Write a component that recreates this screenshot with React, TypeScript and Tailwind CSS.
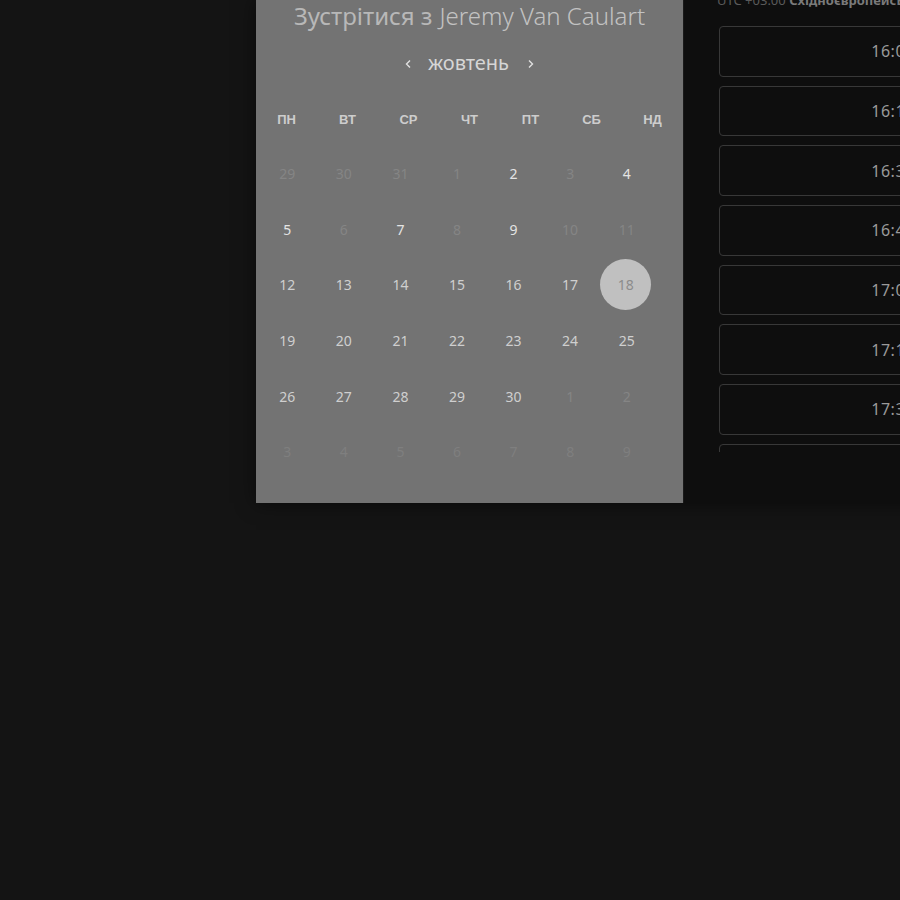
import React from 'react';

type Day = { n: number; state: 'off' | 'open' | 'on' | 'next' | 'sel' };

const weekdays = ['ПН', 'ВТ', 'СР', 'ЧТ', 'ПТ', 'СБ', 'НД'];

const days: Day[] = [
  { n: 29, state: 'off' }, { n: 30, state: 'off' }, { n: 31, state: 'off' }, { n: 1, state: 'off' },
  { n: 2, state: 'open' }, { n: 3, state: 'off' }, { n: 4, state: 'open' },
  { n: 5, state: 'open' }, { n: 6, state: 'off' }, { n: 7, state: 'open' }, { n: 8, state: 'off' },
  { n: 9, state: 'open' }, { n: 10, state: 'off' }, { n: 11, state: 'off' },
  { n: 12, state: 'on' }, { n: 13, state: 'on' }, { n: 14, state: 'on' }, { n: 15, state: 'on' },
  { n: 16, state: 'on' }, { n: 17, state: 'on' }, { n: 18, state: 'sel' },
  { n: 19, state: 'on' }, { n: 20, state: 'on' }, { n: 21, state: 'on' }, { n: 22, state: 'on' },
  { n: 23, state: 'on' }, { n: 24, state: 'on' }, { n: 25, state: 'on' },
  { n: 26, state: 'on' }, { n: 27, state: 'on' }, { n: 28, state: 'on' }, { n: 29, state: 'on' },
  { n: 30, state: 'on' }, { n: 1, state: 'off' }, { n: 2, state: 'off' },
  { n: 3, state: 'next' }, { n: 4, state: 'next' }, { n: 5, state: 'next' }, { n: 6, state: 'next' },
  { n: 7, state: 'next' }, { n: 8, state: 'next' }, { n: 9, state: 'next' },
];

const slots = ['16:00', '16:15', '16:30', '16:45', '17:00', '17:15', '17:30', '17:45'];

const dayColor: Record<Day['state'], string> = {
  off: 'text-[#858585]',
  open: 'text-[#e4e4e4]',
  on: 'text-[#cfcfcf]',
  next: 'text-[#7f7f7f]',
  sel: 'text-[#8c8c8c]',
};

const App: React.FC = () => {
  return (
    <div className="w-[900px] h-[900px] overflow-hidden bg-[#141414] font-['Noto_Sans',sans-serif]">
      <div className="ml-[256px] w-[820px] h-[503px] flex shadow-[0_0_18px_rgba(0,0,0,0.55)]">
        {/* calendar side */}
        <div className="w-[427px] shrink-0 bg-[#737373] flex flex-col">
          <div className="h-[34px] -mt-[1px] flex items-center justify-center text-[24px] text-[#b8b8b8]">
            <span>Зустрітися з</span>
            <span className="ml-[7px] font-light text-[#c2c2c2]">Jeremy Van Caulart</span>
          </div>
          <div className="mt-[14px] h-[34px] flex items-center justify-center text-[#d6d6d6]">
            <svg width="8" height="12" viewBox="0 0 8 12" className="mr-[16px]">
              <path d="M6 2.5 L2.5 6 L6 9.5" fill="none" stroke="#e0e0e0" strokeWidth="1.4" />
            </svg>
            <span className="text-[20px] leading-none pb-[2px]">жовтень</span>
            <svg width="8" height="12" viewBox="0 0 8 12" className="ml-[18px]">
              <path d="M2 2.5 L5.5 6 L2 9.5" fill="none" stroke="#e0e0e0" strokeWidth="1.4" />
            </svg>
          </div>
          <div className="mt-[29px] grid grid-cols-7 h-[16px] items-center font-['Liberation_Sans',sans-serif] font-bold text-[13px] text-[#cdcdcd]">
            {weekdays.map((w) => (
              <div key={w} className="text-center">
                {w}
              </div>
            ))}
          </div>
          <div className="mt-[20px] ml-[3px] w-[396px] grid grid-cols-7 auto-rows-[55.6px] text-[14px]">
            {days.map((d, i) => (
              <div key={i} className="flex items-center justify-center">
                {d.state === 'sel' ? (
                  <div className="w-[51px] h-[51px] rounded-full bg-[#c0c0c0] flex items-center justify-center text-[#8c8c8c] -translate-x-[1px]">
                    {d.n}
                  </div>
                ) : (
                  <span className={dayColor[d.state]}>{d.n}</span>
                )}
              </div>
            ))}
          </div>
        </div>

        {/* time slots side */}
        <div className="flex-1 bg-[#0e0e0e] border-l border-[#1a1a1a] flex flex-col">
          <div className="-mt-[9px] h-[18px] pl-[33px] whitespace-nowrap text-[13px] text-[#5a5a5a]">
            UTC +03:00 <span className="font-bold text-[#7a7a7a]">Східноєвропейський час</span>
          </div>
          <div className="mt-[17px] ml-[35px] h-[426px] overflow-hidden flex flex-col gap-[9px]">
            {slots.map((s) => (
              <div
                key={s}
                className="w-[348px] h-[50.7px] shrink-0 rounded-[4px] border border-[#383838] flex items-center justify-center text-[16px] text-[#9a9a9a] tracking-[0.5px]"
              >
                {s}
              </div>
            ))}
          </div>
        </div>
      </div>
    </div>
  );
};

export default App;
